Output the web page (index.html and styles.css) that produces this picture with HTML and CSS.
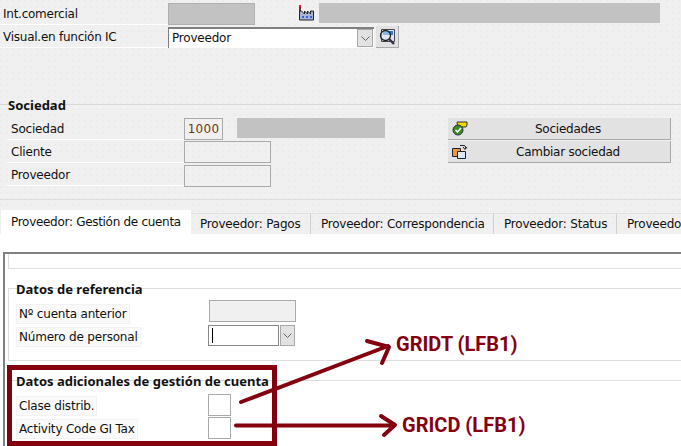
FILE: index.html
```html
<!DOCTYPE html>
<html lang="es">
<head>
<meta charset="utf-8">
<title>Proveedor</title>
<link rel="stylesheet" href="styles.css">
</head>
<body>
<div class="page">
  <section class="head">
    <div class="row">
      <span class="label head-label">Int.comercial</span>
      <span class="field grey w87"></span>
      <svg class="icon factory" width="18" height="16" viewBox="0 0 18 16">
        <path d="M1 1h2v5h-2z" fill="#7a2a2a"/><path d="M1 0h2v2h-2z" fill="#d22"/>
        <path d="M1.500 15V6h2l3 3V6l3 3V6l3 3V6h3v9z" fill="#aab4d6" stroke="#222" stroke-width="1"/>
        <path d="M4 11h2v2H4zM8 11h2v2H8zM12 11h2v2h-2z" fill="#36c"/>
      </svg>
      <span class="bar wide"></span>
    </div>
    <div class="row">
      <span class="label head-label">Visual.en función IC</span>
      <span class="combo">
        <span class="combo-text">Proveedor</span>
        <span class="drop"><svg width="9" height="5" viewBox="0 0 9 5"><path d="M.5.500l4 4 4-4" fill="none" stroke="#666"/></svg></span>
      </span>
      <span class="search-btn">
        <svg width="18" height="18" viewBox="0 0 18 18">
          <path d="M3.500 1.500h13v12h-13z" fill="#dfe6ee" stroke="#445"/>
          <path d="M5 3h10v4H5z" fill="#2a7ad0"/>
          <circle cx="7.500" cy="7.500" r="5" fill="#d8e8f8" fill-opacity=".55" stroke="#222" stroke-width="1.300"/>
          <path d="M11 11l5 5" stroke="#334" stroke-width="2.400"/>
        </svg>
      </span>
    </div>
  </section>

  <section class="group soc">
    <h2 class="title">Sociedad</h2>
    <div class="soc-body">
      <div class="soc-fields">
        <div class="row">
          <span class="label soc-label">Sociedad</span>
          <span class="field code">1000</span>
          <span class="bar desc"></span>
        </div>
        <div class="row">
          <span class="label soc-label">Cliente</span>
          <span class="field w87"></span>
        </div>
        <div class="row">
          <span class="label soc-label">Proveedor</span>
          <span class="field w87 low"></span>
        </div>
      </div>
      <div class="soc-btns">
        <button class="btn">
          <svg class="btn-icon" width="16" height="16" viewBox="0 0 16 16">
            <path d="M5 2h10v3l-1 2H8L6 8z" fill="#f5d800" stroke="#333"/>
            <circle cx="6" cy="10" r="5" fill="#3f8a22" stroke="#234"/>
            <path d="M3.500 10l2 2 3.500-4" fill="none" stroke="#fff" stroke-width="1.500"/>
          </svg>
          Sociedades
        </button>
        <button class="btn">
          <svg class="btn-icon" width="16" height="16" viewBox="0 0 16 16">
            <path d="M.5 5.500h8v8h-8z" fill="#ee9a3a" stroke="#222"/>
            <path d="M5.500 8.500h8v7h-8z" fill="#d8e8fa" stroke="#222"/>
            <path d="M8 2.500h4a2 2 0 0 1 1 3.500M11 4l2 2.500L15 4" fill="none" stroke="#222"/>
          </svg>
          Cambiar sociedad
        </button>
      </div>
    </div>
  </section>

  <nav class="tabs">
    <span class="tab active">Proveedor: Gestión de cuenta</span>
    <span class="tab t2">Proveedor: Pagos</span>
    <span class="tab t3">Proveedor: Correspondencia</span>
    <span class="tab t4">Proveedor: Status</span>
    <span class="tab t5">Proveedor</span>
  </nav>

  <main class="content">
    <div class="panel">
      <div class="strip"></div>
      <section class="group ref">
        <h2 class="title inner-title">Datos de referencia</h2>
        <div class="row sub">
          <span class="cell"><span class="label chip">Nº cuenta anterior</span></span>
          <span class="field ro"></span>
        </div>
        <div class="row sub">
          <span class="cell"><span class="label chip">Número de personal</span></span>
          <span class="input"><i class="caret"></i></span>
          <span class="drop drop-alt"><svg width="9" height="5" viewBox="0 0 9 5"><path d="M.5.500l4 4 4-4" fill="none" stroke="#666"/></svg></span>
        </div>
      </section>
      <section class="group add">
        <h2 class="title inner-title">Datos adicionales de gestión de cuenta</h2>
        <div class="row sub">
          <span class="cell"><span class="label chip">Clase distrib.</span></span>
          <span class="field box"></span>
        </div>
        <div class="row sub">
          <span class="cell"><span class="label chip">Activity Code GI Tax</span></span>
          <span class="field box"></span>
        </div>
      </section>
    </div>
  </main>

  <div class="redbox"></div>
  <svg class="arrows" width="681" height="446" viewBox="0 0 681 446">
    <g fill="none" stroke="#85000f" stroke-width="4" stroke-linecap="round" stroke-linejoin="round">
      <path d="M241 402L388 346"/>
      <path d="M367 341L389 347L382 363"/>
      <path d="M236 425.500H394"/>
      <path d="M381 416L395 425L384 435"/>
    </g>
  </svg>
  <span class="note n1">GRIDT (LFB1)</span>
  <span class="note n2">GRICD (LFB1)</span>
</div>
</body>
</html>
```
FILE: styles.css
```css
* { box-sizing: border-box; }
html, body { margin: 0; padding: 0; }
body { background: #f0f0f0; }
.page {
  position: relative;
  width: 681px;
  height: 446px;
  overflow: hidden;
  font-family: "DejaVu Sans", sans-serif;
  font-size: 12px;
  letter-spacing: -.2px;
  color: #111;
  background-color: #f0f0f0;
  background-image: radial-gradient(circle at 1px 1px, #ebebeb .7px, transparent 1px);
  background-size: 6px 6px;
}
.head { padding-top: 3px; }
.row { display: flex; align-items: flex-start; height: 23px; }
.label { display: block; line-height: 22px; }
.head-label { width: 168px; padding-left: 3px; height: 22px; border-bottom: 1px solid #fff; flex: none; letter-spacing: -.25px; }
.field { display: block; height: 22px; border: 1px solid #aaa; flex: none; }
.grey { background: #c2c2c2; border: 1px solid #b0b0b0; }
.w87 { width: 87px; }
.low { margin-top: 1px; }
.icon { flex: none; }
.factory { margin: 2px 0 0 43px; }
.bar { display: block; height: 20px; background: #c2c2c2; flex: none; }
.wide { width: 341px; margin-left: 3px; }
.combo {
  display: flex; width: 206px; height: 21px; margin-top: 1px; background: #fff;
  border-top: 2px solid #7f7f7f; border-left: 1px solid #7f7f7f;
  justify-content: space-between; flex: none;
}
.combo-text { line-height: 19px; padding-left: 3px; }
.drop {
  display: flex; align-items: center; justify-content: center;
  width: 16px; height: 18px; margin-right: 1px; background: #e2e2e2; border: 1px solid #a8a8a8; flex: none;
}
.search-btn {
  display: flex; align-items: center; justify-content: center;
  width: 23px; height: 22px; margin-left: 2px; background: #e2e2e2;
  border-right: 1px solid #aaa; border-bottom: 1px solid #aaa; flex: none;
}
.group { border-top: 1px solid #d9d9d9; }
.title { margin: 0; font-family: "Noto Sans", sans-serif; font-size: 13px; line-height: 14px; font-weight: 700; letter-spacing: 0; }
.soc {
  margin-top: 55px; height: 96px; padding: 0 0 0 8px;
  border-bottom: 1px solid #dcdcdc;
}
.soc > .title { margin-top: -7px; }
.soc-body { display: flex; padding-top: 6px; margin-left: -1px; }
.soc-fields { width: 441px; flex: none; }
.soc-label {
  width: 177px; padding-left: 4px; height: 22px; flex: none; border-bottom: 1px solid #fff;
  line-height: 23px;
}
.code {
  width: 39px; text-align: center; line-height: 20px; color: #6b3a10;
  letter-spacing: .3px;
}
.desc { width: 148px; margin-left: 14px; }
.soc-btns { display: flex; flex-direction: column; gap: 1px; width: 223px; flex: none; }
.btn {
  position: relative; display: block; width: 223px; height: 22px; padding: 0 0 0 18px;
  background: #e2e2e2; border: 0; border-bottom: 1px solid #a8a8a8; border-right: 1px solid #a8a8a8;
  font: inherit; letter-spacing: -.25px; color: #111; text-align: center;
}
.btn-icon { position: absolute; left: 4px; top: 2px; }
.tabs { display: flex; margin-top: 10px; height: 24px; padding-left: 1px; }
.tab {
  display: block; height: 21px; margin-top: 3px; line-height: 20px; white-space: nowrap;
  border-right: 1px solid #d0d0d0; border-top: 1px solid #e0e0e0; flex: none; padding-left: 10px;
}
.active {
  height: 24px; margin-top: 0; width: 190px; background: #fff;
  line-height: 25px; border: 0; padding-left: 10px; letter-spacing: -.3px;
}
.t2 { width: 120px; padding-left: 9px; }
.t3 { width: 183px; letter-spacing: -.23px; }
.t4 { width: 123px; }
.t5 { width: 64px; border-right: 0; overflow: hidden; }
.content { height: 212px; background: #fff; padding: 18px 0 0 3px; }
.panel {
  height: 194px; border-top: 2px solid #808080; border-left: 2px solid #808080;
  padding: 0 0 0 3px;
}
.strip { height: 15px; border-left: 1px solid #ddd; border-bottom: 1px solid #ddd; }
.ref {
  margin-top: 19px; height: 73px; border: 0; border-top: 1px solid #ddd;
  border-bottom: 1px solid #ddd; border-left: 1px solid #ddd; padding-left: 7px;
}
.add { margin-top: 19px; height: 70px; border-top: 1px solid #ddd; padding-left: 8px; }
.inner-title { margin-top: -7px; }
.sub { padding-left: 1px; }
.inner-title + .sub { margin-top: 7px; }
.cell { display: block; width: 191px; flex: none; }
.chip {
  display: inline-block; height: 18px; line-height: 18px; padding: 0 2px; margin-top: 2px;
  background: #fafafa; outline: 1px solid #f2f2f2;
}
.ro { width: 87px; margin: -3px 0 0 1px; background: #f0f0f0; }
.input { display: block; width: 71px; height: 21px; margin-top: -1px; background: #fff; border: 1px solid #888; flex: none; }
.caret { display: block; width: 1px; height: 15px; margin: 2px 0 0 3px; background: #000; }
.drop-alt { width: 15px; height: 21px; margin: -1px 0 0 1px; }
.box { width: 23px; margin-top: -1px; background: #fff; }
.redbox {
  position: absolute; left: 7px; top: 365px; width: 270px; height: 81px;
  border: 5px solid #85000f;
}
.arrows { position: absolute; left: 0; top: 0; }
.note {
  position: absolute; font-family: "Roboto", sans-serif; font-weight: 700;
  font-size: 20px; line-height: 22px; letter-spacing: 0; color: #85000f; white-space: nowrap;
}
.n1 { left: 396px; top: 333px; }
.n2 { left: 402px; top: 414px; }
```
